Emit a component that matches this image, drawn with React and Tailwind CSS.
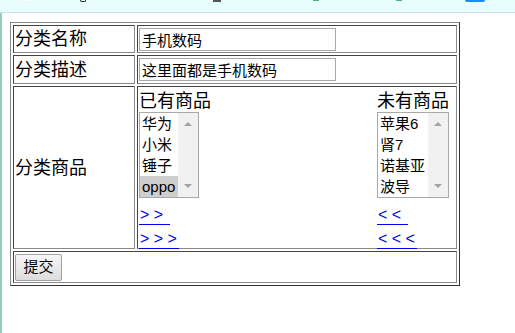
import React from 'react';

const font = "font-['Liberation_Sans','Noto_Sans_CJK_SC',sans-serif]";
const cell = 'border border-t-[#444] border-l-[#444] border-b-[#8a8a8a] border-r-[#8a8a8a] p-px';

function ListBox({ items, selected, width }) {
    return (
        <div className={`flex h-[86px] border border-[#a9a9a9] bg-white ${width}`}>
            <div className="flex-1 flex flex-col">
                {items.map((item) => (
                    <div
                        key={item}
                        className={`h-[21px] leading-[21px] pl-[2px] text-[15px] text-black ${
                            item === selected ? 'bg-[#cecece]' : ''
                        }`}
                    >
                        {item}
                    </div>
                ))}
            </div>
            <div className="w-[20px] bg-[#f1f1f1] flex flex-col justify-between items-center py-[9px]">
                <div className="w-0 h-0 border-x-[4px] border-x-transparent border-b-[4px] border-b-[#a3a3a3]" />
                <div className="w-0 h-0 border-x-[4px] border-x-transparent border-t-[4px] border-t-[#a3a3a3]" />
            </div>
        </div>
    );
}

function ArrowLink({ text, width, mt }) {
    return (
        <div className={`h-[18px] ${mt}`}>
            <a href="#" className={`inline-block h-[18px] leading-[16px] pl-[1px] border-b border-[#0000ee] text-[16px] text-[#0000ee] whitespace-pre ${width}`}>
                {text}
            </a>
        </div>
    );
}

export default function App() {
    return (
        <div className={`w-[515px] h-[333px] overflow-hidden bg-white ${font}`}>
            {/* cut-off browser bar */}
            <div className="h-[13px] bg-[#e8fefe] border-b border-[#c9e4e4] flex items-start">
                <div className="ml-[23px] w-[10px] h-px bg-white" />
                <div className="ml-[47px] w-[6px] h-[2px] rounded-b-full border border-t-0 border-[#222]" />
                <div className="ml-[127px] w-[8px] h-[2px] bg-[#555]" />
                <div className="ml-[92px] w-[6px] h-px bg-[#4caf7a]" />
                <div className="ml-[77px] w-[6px] h-px bg-[#4caf7a]" />
                <div className="ml-[63px] w-[20px] h-[2px] rounded-b-full bg-[#1a8cff]" />
            </div>

            <div className="flex h-[320px]">
                <div className="w-[2px] bg-[#93cfb3]" />
                <div className="ml-[8px] mt-[9px]">
                    <div className="w-[450px] border border-t-[#8a8a8a] border-l-[#8a8a8a] border-b-[#333] border-r-[#333] p-[2px] flex flex-col gap-[2px] text-black">
                        {/* row 1 */}
                        <div className="flex gap-[2px] h-[28px]">
                            <div className={`${cell} w-[122px] flex items-center text-[18px] leading-[20px]`}>分类名称</div>
                            <div className={`${cell} flex-1 flex items-center`}>
                                <input
                                    type="text"
                                    defaultValue="手机数码"
                                    className="w-[197px] h-[23px] border border-[#a9a9a9] px-[2px] text-[15px] outline-none"
                                />
                            </div>
                        </div>

                        {/* row 2 */}
                        <div className="flex gap-[2px] h-[29px]">
                            <div className={`${cell} w-[122px] flex items-center text-[18px] leading-[20px]`}>分类描述</div>
                            <div className={`${cell} flex-1 flex items-center`}>
                                <input
                                    type="text"
                                    defaultValue="这里面都是手机数码"
                                    className="w-[197px] h-[23px] border border-[#a9a9a9] px-[2px] text-[15px] outline-none"
                                />
                            </div>
                        </div>

                        {/* row 3 */}
                        <div className="flex gap-[2px] h-[163px]">
                            <div className={`${cell} w-[122px] flex items-center text-[18px] leading-[20px]`}>分类商品</div>
                            <div className={`${cell} flex-1 flex justify-between pr-[7px] pt-[4px]`}>
                                <div className="flex flex-col">
                                    <div className="h-[21px] text-[18px] leading-[20px]">已有商品</div>
                                    <ListBox items={['华为', '小米', '锤子', 'oppo']} selected="oppo" width="w-[60px]" />
                                    <ArrowLink text={'> >'} width="w-[31px]" mt="mt-[5px]" />
                                    <ArrowLink text={'> > >'} width="w-[40px]" mt="mt-[6px]" />
                                </div>
                                <div className="flex flex-col">
                                    <div className="h-[21px] text-[18px] leading-[20px]">未有商品</div>
                                    <ListBox items={['苹果6', '肾7', '诺基亚', '波导']} width="w-[72px]" />
                                    <ArrowLink text={'< <'} width="w-[31px]" mt="mt-[5px]" />
                                    <ArrowLink text={'< < <'} width="w-[40px]" mt="mt-[6px]" />
                                </div>
                            </div>
                        </div>

                        {/* row 4 */}
                        <div className={`${cell} h-[32px] flex items-center`}>
                            <button className="w-[47px] h-[27px] border border-[#a0a0a0] rounded-[2px] bg-linear-to-b from-[#f7f7f7] to-[#dcdcdc] text-[15px] leading-[20px]">
                                提交
                            </button>
                        </div>
                    </div>
                </div>
            </div>
        </div>
    );
}
